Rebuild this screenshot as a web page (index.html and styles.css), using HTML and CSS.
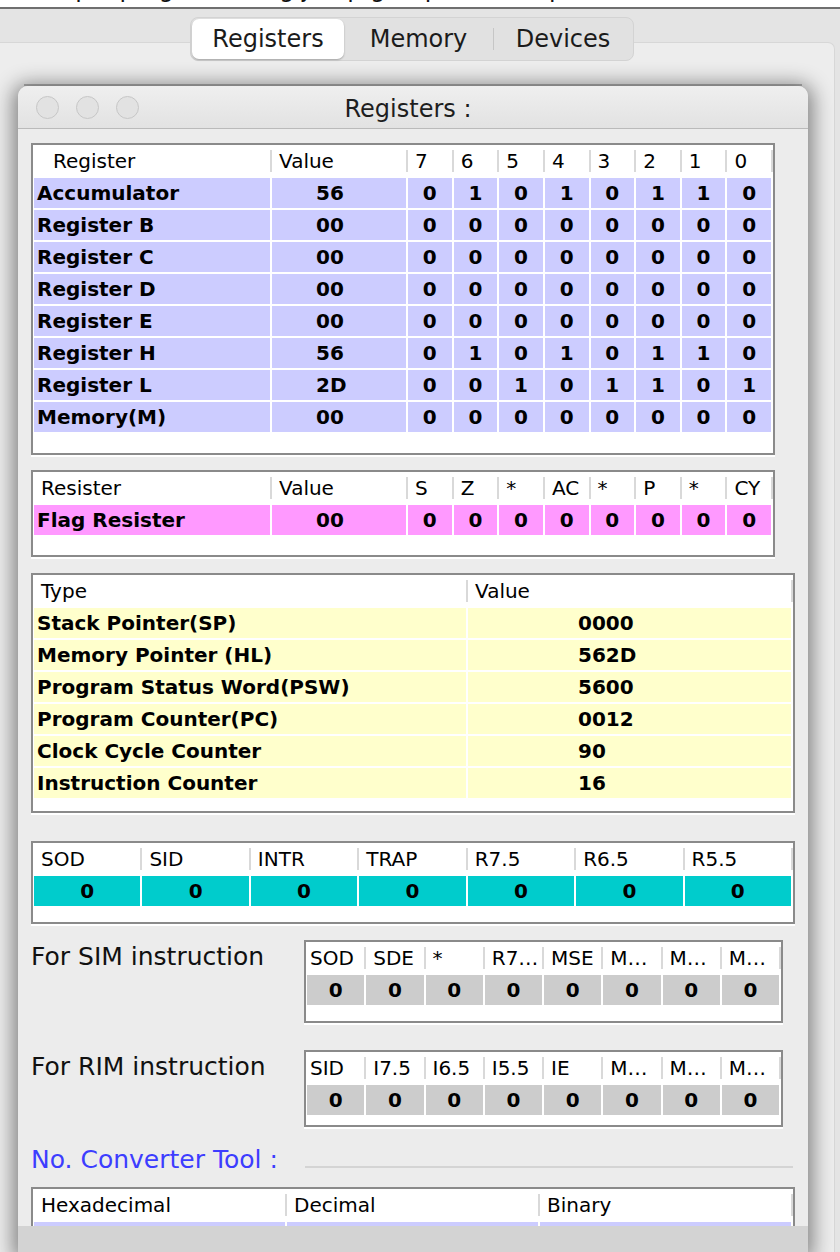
FILE: index.html
```html
<!DOCTYPE html>
<html>
<head>
<meta charset="utf-8">
<title>Registers</title>
<link rel="stylesheet" href="styles.css">
</head>
<body>
<div class="topbar"><span>Simple program using jump groups and loops</span></div>
<div class="stage">
  <div class="panel">
    <div class="seg">
      <div class="seg-tab active">Registers</div>
      <div class="seg-tab memory">Memory</div>
      <div class="seg-div"></div>
      <div class="seg-tab devices">Devices</div>
    </div>
    <div class="backline"></div>
    <div class="window">
      <div class="titlebar">
        <div class="lights"><span class="light"></span><span class="light"></span><span class="light"></span></div>
        <div class="title">Registers :</div>
        <div></div>
      </div>
      <div class="content">

        <div class="box regs">
          <div class="thead">
            <div class="first">Register</div><div>Value</div><div>7</div><div>6</div><div>5</div><div>4</div><div>3</div><div>2</div><div>1</div><div>0</div>
          </div>
          <div class="tbody">
            <div class="trow lav"><div class="name">Accumulator</div><div class="val">56</div><div>0</div><div>1</div><div>0</div><div>1</div><div>0</div><div>1</div><div>1</div><div>0</div></div>
            <div class="trow lav"><div class="name">Register B</div><div class="val">00</div><div>0</div><div>0</div><div>0</div><div>0</div><div>0</div><div>0</div><div>0</div><div>0</div></div>
            <div class="trow lav"><div class="name">Register C</div><div class="val">00</div><div>0</div><div>0</div><div>0</div><div>0</div><div>0</div><div>0</div><div>0</div><div>0</div></div>
            <div class="trow lav"><div class="name">Register D</div><div class="val">00</div><div>0</div><div>0</div><div>0</div><div>0</div><div>0</div><div>0</div><div>0</div><div>0</div></div>
            <div class="trow lav"><div class="name">Register E</div><div class="val">00</div><div>0</div><div>0</div><div>0</div><div>0</div><div>0</div><div>0</div><div>0</div><div>0</div></div>
            <div class="trow lav"><div class="name">Register H</div><div class="val">56</div><div>0</div><div>1</div><div>0</div><div>1</div><div>0</div><div>1</div><div>1</div><div>0</div></div>
            <div class="trow lav"><div class="name">Register L</div><div class="val">2D</div><div>0</div><div>0</div><div>1</div><div>0</div><div>1</div><div>1</div><div>0</div><div>1</div></div>
            <div class="trow lav"><div class="name">Memory(M)</div><div class="val">00</div><div>0</div><div>0</div><div>0</div><div>0</div><div>0</div><div>0</div><div>0</div><div>0</div></div>
          </div>
        </div>

        <div class="box regs flags">
          <div class="thead">
            <div>Resister</div><div>Value</div><div>S</div><div>Z</div><div>*</div><div>AC</div><div>*</div><div>P</div><div>*</div><div>CY</div>
          </div>
          <div class="tbody">
            <div class="trow pink"><div class="name">Flag Resister</div><div class="val">00</div><div>0</div><div>0</div><div>0</div><div>0</div><div>0</div><div>0</div><div>0</div><div>0</div></div>
          </div>
        </div>

        <div class="box types">
          <div class="thead"><div>Type</div><div>Value</div></div>
          <div class="tbody">
            <div class="trow yel"><div class="name">Stack Pointer(SP)</div><div class="val">0000</div></div>
            <div class="trow yel"><div class="name">Memory Pointer (HL)</div><div class="val">562D</div></div>
            <div class="trow yel"><div class="name">Program Status Word(PSW)</div><div class="val">5600</div></div>
            <div class="trow yel"><div class="name">Program Counter(PC)</div><div class="val">0012</div></div>
            <div class="trow yel"><div class="name">Clock Cycle Counter</div><div class="val">90</div></div>
            <div class="trow yel"><div class="name">Instruction Counter</div><div class="val">16</div></div>
          </div>
        </div>

        <div class="box ints">
          <div class="thead"><div>SOD</div><div>SID</div><div>INTR</div><div>TRAP</div><div>R7.5</div><div>R6.5</div><div>R5.5</div></div>
          <div class="tbody">
            <div class="trow cyan"><div>0</div><div>0</div><div>0</div><div>0</div><div>0</div><div>0</div><div>0</div></div>
          </div>
        </div>

        <div class="iorow sim">
          <div class="label">For SIM instruction</div>
          <div class="box io">
            <div class="thead"><div class="tight">SOD</div><div>SDE</div><div>*</div><div>R7…</div><div>MSE</div><div>M…</div><div>M…</div><div>M…</div></div>
            <div class="tbody">
              <div class="trow gray"><div>0</div><div>0</div><div>0</div><div>0</div><div>0</div><div>0</div><div>0</div><div>0</div></div>
            </div>
          </div>
        </div>

        <div class="iorow rim">
          <div class="label">For RIM instruction</div>
          <div class="box io">
            <div class="thead"><div class="tight">SID</div><div>I7.5</div><div>I6.5</div><div>I5.5</div><div>IE</div><div>M…</div><div>M…</div><div>M…</div></div>
            <div class="tbody">
              <div class="trow gray"><div>0</div><div>0</div><div>0</div><div>0</div><div>0</div><div>0</div><div>0</div><div>0</div></div>
            </div>
          </div>
        </div>

        <div class="conv-head">
          <div class="conv-title">No. Converter Tool :</div>
          <div class="conv-line"></div>
        </div>

        <div class="box conv">
          <div class="thead"><div>Hexadecimal</div><div>Decimal</div><div>Binary</div></div>
          <div class="tbody">
            <div class="trow lav"><div></div><div></div><div></div></div>
          </div>
        </div>

      </div>
      <div class="statusbar"></div>
    </div>
  </div>
</div>
</body>
</html>
```

FILE: styles.css
```css
* { box-sizing: border-box; }

html, body {
  margin: 0;
  padding: 0;
}

body {
  width: 840px;
  height: 1252px;
  overflow: hidden;
  background: #e4e4e4;
  font-family: "DejaVu Sans", "Noto Sans", sans-serif;
  color: #000;
}

/* cut-off text strip at the very top: only the descenders remain visible */
.topbar {
  height: 9px;
  background: #fff;
  border-bottom: 2px solid #6f6f6f;
  overflow: hidden;
}
.topbar span {
  display: block;
  font-size: 24px;
  line-height: 24px;
  margin-top: -23px;
  padding-left: 30px;
  color: #111;
  white-space: nowrap;
}

.stage {
  padding-top: 33px;
}

.panel {
  margin-right: 5px;
  height: 1220px;
  background: #ededed;
  border-top: 1px solid #d7d7d7;
  border-right: 1px solid #d7d7d7;
  border-top-right-radius: 7px;
}

/* segmented tab control */
.seg {
  margin-top: -26px;
  margin-left: 190px;
  width: 444px;
  height: 44px;
  padding: 1px;
  display: flex;
  align-items: center;
  background: #e1e1e1;
  border: 1px solid #d3d3d3;
  border-radius: 8px;
}
.seg-tab {
  height: 40px;
  display: flex;
  align-items: center;
  justify-content: center;
  font-size: 24px;
  color: #1b1b1b;
}
.seg-tab.active {
  width: 152px;
  background: #fff;
  border-radius: 7px;
  box-shadow: 0 1px 2px rgba(0, 0, 0, 0.28);
}
.seg-tab.memory {
  width: 149px;
}
.seg-div {
  width: 1px;
  height: 22px;
  background: #c6c6c6;
}
.seg-tab.devices {
  flex: 1;
}

.backline {
  margin-top: 23px;
  margin-left: 24px;
  width: 778px;
  height: 2px;
  background: #b1b1b1;
}

/* inner window */
.window {
  margin-left: 18px;
  width: 790px;
  height: 1166px;
  display: flex;
  flex-direction: column;
  background: #ececec;
  border-radius: 10px 10px 0 0;
  box-shadow: 0 3px 20px 5px rgba(0, 0, 0, 0.45);
  overflow: hidden;
}

.titlebar {
  height: 43px;
  flex: none;
  display: grid;
  grid-template-columns: 1fr auto 1fr;
  align-items: center;
  padding-right: 10px;
  padding-top: 3px;
  background: linear-gradient(#efefef, #e2e2e2);
  border-bottom: 1px solid #bababa;
}
.lights {
  display: flex;
  gap: 17px;
  padding-left: 18px;
  margin-top: -2px;
}
.light {
  width: 23px;
  height: 23px;
  border-radius: 50%;
  background: #e2e2e2;
  border: 1px solid #c6c6c6;
}
.title {
  font-size: 24px;
  color: #1e1e1e;
}

.content {
  flex: 1;
  min-height: 0;
  overflow: hidden;
  padding: 14px 13px 0;
}

.statusbar {
  flex: none;
  height: 26px;
  background: #d3d3d3;
}

/* tables */
.box {
  background: #fff;
  border: 2px solid #8a8a8a;
  box-shadow: 0 2px 0 #fff;
  padding-left: 1px;
}

.thead {
  display: grid;
  height: 33px;
}
.thead > div {
  height: 33px;
  line-height: 33px;
  padding-left: 7px;
  font-size: 20px;
  white-space: nowrap;
  overflow: hidden;
  background: linear-gradient(#d9d9d9, #d9d9d9) no-repeat right 5px / 2px 22px;
}
.thead > .first {
  padding-left: 19px;
}

.tbody {
  display: flex;
  flex-direction: column;
  gap: 2px;
  margin-right: 2px;
}
.trow {
  display: grid;
  column-gap: 2px;
  height: 30px;
}
.trow > div {
  line-height: 30px;
  font-size: 20px;
  font-weight: bold;
  text-align: center;
  white-space: nowrap;
}
.trow > .name {
  text-align: left;
  padding-left: 3px;
}
.trow > .val {
  text-align: left;
  padding-left: 44px;
}

.lav > div { background: #ccccff; }
.pink > div { background: #ff99ff; }
.yel > div { background: #ffffcc; }
.cyan > div { background: #00cccc; }
.gray > div { background: #cccccc; }

/* register table */
.regs {
  width: 744px;
  padding-bottom: 21px;
}
.regs .thead { grid-template-columns: 238px 136px repeat(8, 1fr); }
.regs .trow { grid-template-columns: 236px 134px repeat(8, 1fr); }

.flags {
  margin-top: 15px;
  padding-bottom: 20px;
}

/* type / value table */
.types {
  width: 764px;
  margin-top: 16px;
  padding-bottom: 13px;
}
.types .thead { grid-template-columns: 434px 1fr; }
.types .trow { grid-template-columns: 432px 1fr; }
.types .trow > .val { padding-left: 110px; }

/* interrupt table */
.ints {
  width: 764px;
  margin-top: 28px;
  padding-bottom: 16px;
}
.ints .thead, .ints .trow { grid-template-columns: repeat(7, 1fr); }

/* SIM / RIM */
.iorow {
  display: flex;
  align-items: flex-start;
}
.iorow.sim { margin-top: 16px; }
.iorow.rim { margin-top: 27px; }
.label {
  width: 273px;
  font-size: 25px;
  line-height: 33px;
  color: #111;
  white-space: nowrap;
}
.io {
  width: 479px;
  padding-bottom: 16px;
}
.rim .io { padding-bottom: 10px; }
.io .thead, .io .trow { grid-template-columns: repeat(8, 1fr); }
.io .thead > .tight { padding-left: 3px; }

/* converter */
.conv-head {
  margin-top: 18px;
  height: 30px;
  display: flex;
  align-items: center;
}
.conv-title {
  font-size: 25px;
  line-height: 30px;
  color: #3d3dff;
  white-space: nowrap;
}
.conv-line {
  flex: 1;
  height: 2px;
  margin: 14px 2px 0 27px;
  background: #d4d4d4;
}

.conv {
  width: 764px;
  margin-top: 12px;
  padding-bottom: 20px;
}
.conv .thead, .conv .trow { grid-template-columns: repeat(3, 1fr); }
```
